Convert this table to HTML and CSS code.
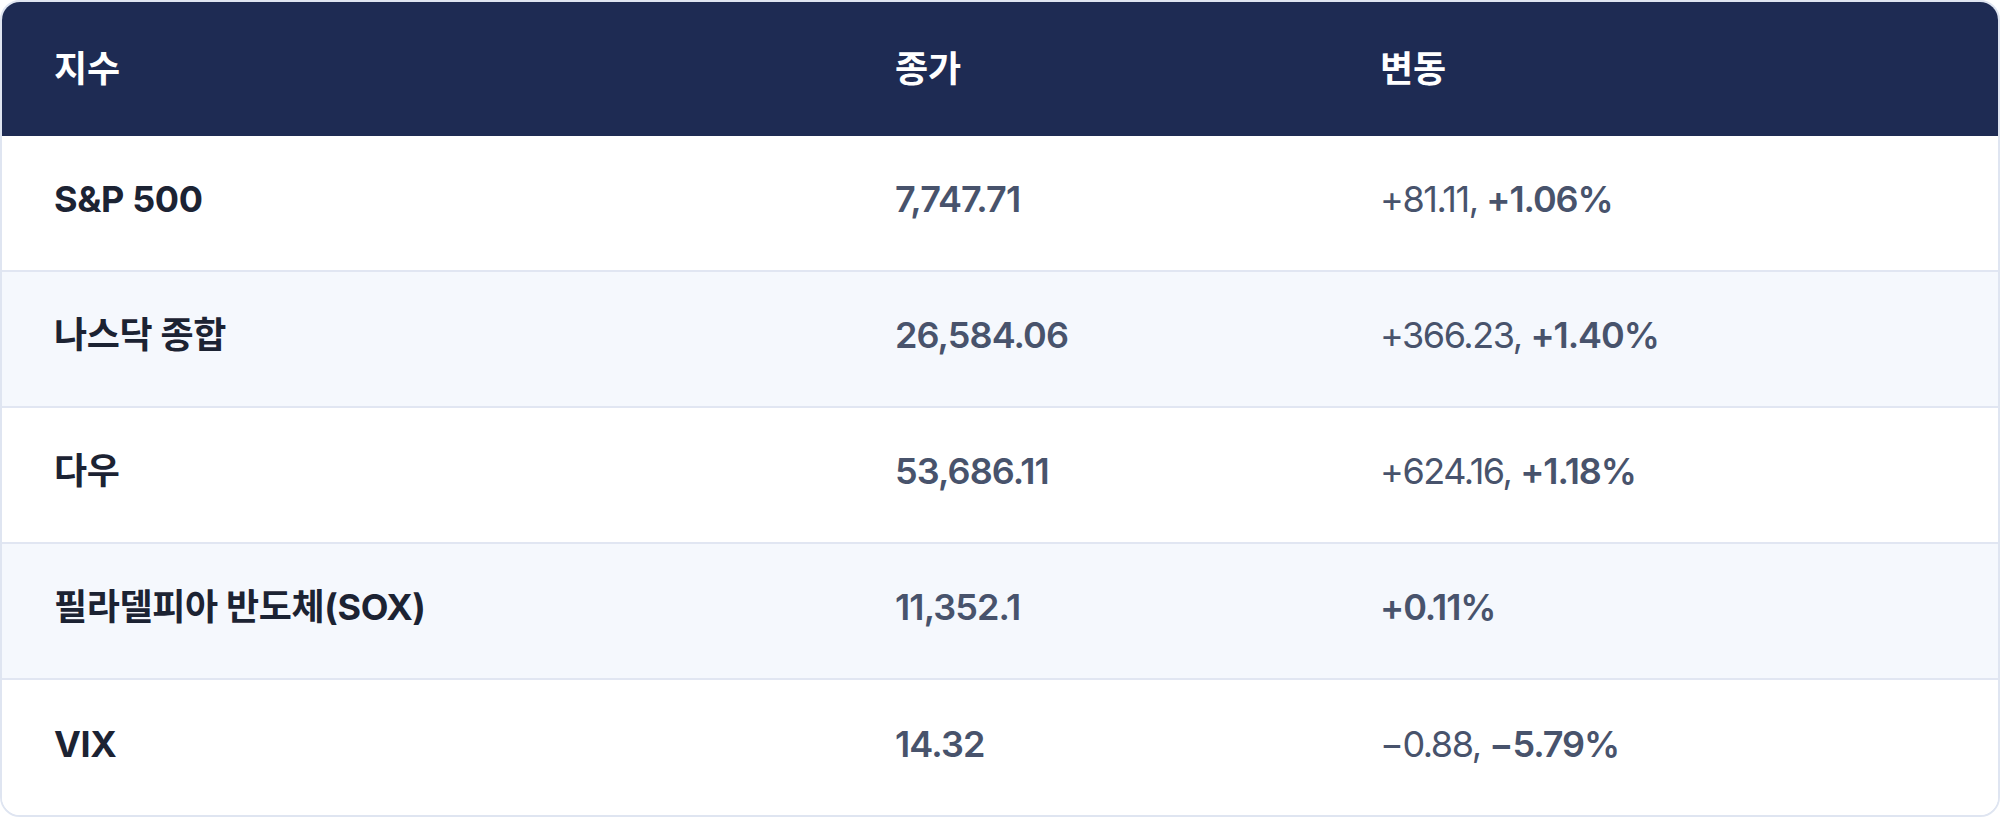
FILE: index.html
```html
<!DOCTYPE html>
<html lang="ko">
<head>
<meta charset="utf-8">
<title>지수</title>
<link rel="stylesheet" href="styles.css">
</head>
<body>
<div class="table">
  <div class="row head">
    <div class="cell">지수</div>
    <div class="cell">종가</div>
    <div class="cell">변동</div>
  </div>
  <div class="row">
    <div class="cell name">S&amp;P 500</div>
    <div class="cell close">7,747.71</div>
    <div class="cell chg">+81.11, <b>+1.06%</b></div>
  </div>
  <div class="row alt">
    <div class="cell name">나스닥 종합</div>
    <div class="cell close">26,584.06</div>
    <div class="cell chg">+366.23, <b>+1.40%</b></div>
  </div>
  <div class="row">
    <div class="cell name">다우</div>
    <div class="cell close">53,686.11</div>
    <div class="cell chg">+624.16, <b>+1.18%</b></div>
  </div>
  <div class="row alt">
    <div class="cell name">필라델피아 반도체(SOX)</div>
    <div class="cell close">11,352.1</div>
    <div class="cell chg"><b>+0.11%</b></div>
  </div>
  <div class="row last">
    <div class="cell name">VIX</div>
    <div class="cell close">14.32</div>
    <div class="cell chg">&minus;0.88, <b>&minus;5.79%</b></div>
  </div>
</div>
</body>
</html>
```
FILE: styles.css
```css
html, body {
  margin: 0;
  padding: 0;
  background: #ffffff;
}
body {
  font-family: "Inter", "Noto Sans CJK KR", sans-serif;
}
.table {
  width: 2000px;
  box-sizing: border-box;
  border: 2px solid #dfe5f1;
  border-radius: 20px;
  overflow: hidden;
}
.row {
  display: grid;
  grid-template-columns: 841px 485px 1fr;
  height: 136px;
  box-sizing: border-box;
  border-bottom: 2px solid #e1e6f2;
  background: #ffffff;
}
.row.alt {
  background: #f5f8fd;
}
.row.last {
  border-bottom: none;
  height: 135px;
}
.row.head {
  background: #1e2b53;
  height: 134px;
  border-bottom: none;
}
.cell {
  display: flex;
  align-items: center;
  padding-left: 52px;
  padding-bottom: 8px;
  font-size: 36px;
  line-height: 1;
  white-space: pre;
}
.head .cell {
  color: #ffffff;
  font-weight: 700;
  padding-bottom: 0;
}
.name {
  color: #1c2333;
  font-weight: 700;
  letter-spacing: -0.01em;
}
.close {
  color: #48536c;
  font-weight: 600;
  letter-spacing: -0.025em;
}
.chg {
  color: #48536c;
  font-weight: 400;
  letter-spacing: -0.04em;
}
.chg b {
  font-weight: 600;
  letter-spacing: -0.03em;
}
```
